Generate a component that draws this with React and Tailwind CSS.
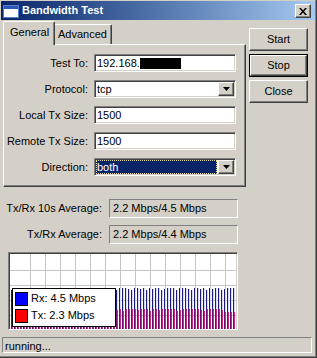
import React from "react";

const raised =
  "border border-t-white border-l-white border-r-[#404040] border-b-[#404040] shadow-[inset_-1px_-1px_0_#808080]";
const sunken =
  "border border-t-[#808080] border-l-[#808080] border-r-white border-b-white shadow-[inset_1px_1px_0_#404040,inset_-1px_-1px_0_#d4d0c8]";
const thinSunken =
  "border border-t-[#808080] border-l-[#808080] border-r-white border-b-white";

function DropButton() {
  return (
    <div className={`w-[16px] h-[14px] bg-[#d4d0c8] flex items-center justify-center ${raised}`}>
      <svg width="7" height="4" viewBox="0 0 7 4">
        <path d="M0 0h7L3.5 4z" fill="#000" />
      </svg>
    </div>
  );
}

function Row({ label, children }) {
  return (
    <div className="flex items-center h-[18px]">
      <div className="w-[84px] text-right">{label}</div>
      <div className={`ml-[6px] w-[142px] h-[18px] bg-white flex items-center ${sunken}`}>
        {children}
      </div>
    </div>
  );
}

function Chart() {
  const bars = [];
  for (let i = 0; i < 75; i++) {
    const rxTop = 34 + ((i * 7) % 5 === 0 ? 2 : (i * 3) % 4 === 1 ? 1 : 0);
    let txTop = 55 + ((i * 5) % 7 === 0 ? 1 : (i * 11) % 9 === 2 ? 2 : 0);
    if (i > 70) txTop = 58;
    bars.push({ x: i * 3 + 1, rxTop, txTop });
  }
  const vLines = [];
  for (let x = 20; x < 227; x += 15) vLines.push(x);
  const hLines = [16, 31, 46, 61];

  return (
    <div className={`relative ml-[8px] w-[230px] h-[78px] bg-white pt-[1px] pl-[1px] ${sunken}`}>
      <svg width="226" height="75" viewBox="0 0 226 75" className="block">
        <rect width="226" height="75" fill="#ffffff" />
        {vLines.map((x) => (
          <line key={"v" + x} x1={x + 0.5} y1="0" x2={x + 0.5} y2="75" stroke="#c4c4c4" />
        ))}
        {hLines.map((y) => (
          <line key={"h" + y} x1="0" y1={y + 0.5} x2="226" y2={y + 0.5} stroke="#c4c4c4" />
        ))}
        {bars.map((b, i) => (
          <g key={i}>
            <rect x={b.x} y={b.rxTop} width="2" height={75 - b.rxTop} fill="#d6d6f6" />
            <rect x={b.x} y={b.rxTop} width="1" height={75 - b.rxTop} fill="#1c1c80" />
            <rect x={b.x} y={b.txTop} width="2" height={75 - b.txTop} fill="#c8288e" />
            <rect x={b.x} y={b.txTop} width="1" height={75 - b.txTop} fill="#6c1070" />
          </g>
        ))}
      </svg>
      <div className="absolute left-[3px] top-[35px] w-[104px] h-[39px] bg-white border border-black pl-[2px] pt-[2px] flex flex-col gap-[2px]">
        <div className="flex items-center h-[15px]">
          <div className="w-[13px] h-[14px] bg-[#0000ff] border border-black" />
          <span className="ml-[3px]">Rx: 4.5 Mbps</span>
        </div>
        <div className="flex items-center h-[15px]">
          <div className="w-[13px] h-[14px] bg-[#ff0000] border border-black" />
          <span className="ml-[3px]">Tx: 2.3 Mbps</span>
        </div>
      </div>
    </div>
  );
}

export default function App() {
  return (
    <div className="relative w-[317px] h-[358px] overflow-hidden bg-[#d4d0c8] text-[11px] leading-none text-black font-['Liberation_Sans',Arial,sans-serif] shadow-[inset_-1px_-1px_0_#404040,inset_-2px_-2px_0_#808080]">
      {/* Title bar */}
      <div className="ml-[1px] pt-[1px] w-[314px]">
        <div className="h-[19px] bg-gradient-to-r from-[#0a246a] to-[#a6caf0] flex items-center pl-[2px] pr-[4px]">
          <svg width="16" height="13" viewBox="0 0 16 13" className="mt-[1px]">
            <rect x="0.5" y="0.5" width="15" height="12" fill="#ffffff" stroke="#5a7ec8" />
            <rect x="1" y="1" width="14" height="3" fill="#2a5ab8" />
          </svg>
          <span className="ml-[3px] text-white font-bold">Bandwidth Test</span>
          <div className={`ml-auto mt-[1px] w-[16px] h-[14px] bg-[#d4d0c8] flex items-center justify-center ${raised}`}>
            <svg width="8" height="7" viewBox="0 0 8 7">
              <path d="M0 0h2l2 2.5L6 0h2L5 3.5 8 7H6L4 4.5 2 7H0l3-3.5z" fill="#000" />
            </svg>
          </div>
        </div>
      </div>

      {/* Body */}
      <div className="flex mt-[1px]">
        <div className="ml-[3px] w-[243px]">
          <div className="flex items-end h-[23px]">
            <div className="relative z-10 -mb-px h-[24px] w-[52px] bg-[#d4d0c8] border-t border-l border-white border-r border-r-[#404040] rounded-t-[2px] shadow-[inset_-1px_0_0_#808080] flex items-center pl-[6px] pb-[3px]">
              General
            </div>
            <div className="h-[20px] w-[57px] bg-[#d4d0c8] border-t border-white border-r border-r-[#404040] rounded-tr-[2px] shadow-[inset_-1px_0_0_#808080] flex items-center pl-[3px] pb-[1px]">
              Advanced
            </div>
          </div>
          <div className={`h-[143px] pt-[9px] flex flex-col gap-[8px] ${raised}`}>
            <Row label="Test To:">
              <span className="ml-[2px]">192.168.</span>
              <span className="inline-block w-[41px] h-[11px] bg-black" />
            </Row>
            <Row label="Protocol:">
              <span className="ml-[2px]">tcp</span>
              <div className="ml-auto mr-[1px]">
                <DropButton />
              </div>
            </Row>
            <Row label="Local Tx Size:">
              <span className="ml-[2px]">1500</span>
            </Row>
            <Row label="Remote Tx Size:">
              <span className="ml-[2px]">1500</span>
            </Row>
            <Row label="Direction:">
              <div className="ml-[1px] mr-[1px] h-[14px] flex-1 bg-[#0a246a] text-white flex items-center pl-[1px] outline-1 outline-dotted outline-[#e8e0a0] -outline-offset-1">
                both
              </div>
              <div className="mr-[1px]">
                <DropButton />
              </div>
            </Row>
          </div>
        </div>

        <div className="ml-[3px] mt-[7px] w-[59px] flex flex-col gap-[3px]">
          <div className={`h-[23px] bg-[#d4d0c8] flex items-center justify-center ${raised}`}>Start</div>
          <div className="h-[23px] border border-black">
            <div className={`h-full bg-[#d4d0c8] flex items-center justify-center ${raised}`}>Stop</div>
          </div>
          <div className={`h-[23px] bg-[#d4d0c8] flex items-center justify-center ${raised}`}>Close</div>
        </div>
      </div>

      {/* Averages */}
      <div className="mt-[12px] flex flex-col gap-[7px]">
        <div className="flex items-center">
          <div className="w-[102px] text-right">Tx/Rx 10s Average:</div>
          <div className={`ml-[7px] w-[129px] h-[19px] flex items-center pl-[3px] ${thinSunken}`}>
            2.2 Mbps/4.5 Mbps
          </div>
        </div>
        <div className="flex items-center">
          <div className="w-[102px] text-right">Tx/Rx Average:</div>
          <div className={`ml-[7px] w-[129px] h-[19px] flex items-center pl-[3px] ${thinSunken}`}>
            2.2 Mbps/4.4 Mbps
          </div>
        </div>
      </div>

      {/* Graph */}
      <div className="mt-[8px]">
        <Chart />
      </div>

      {/* Status bar */}
      <div className={`mt-[7px] ml-[2px] w-[310px] h-[16px] flex items-center pl-[2px] pt-[2px] ${thinSunken}`}>
        running...
      </div>
    </div>
  );
}
